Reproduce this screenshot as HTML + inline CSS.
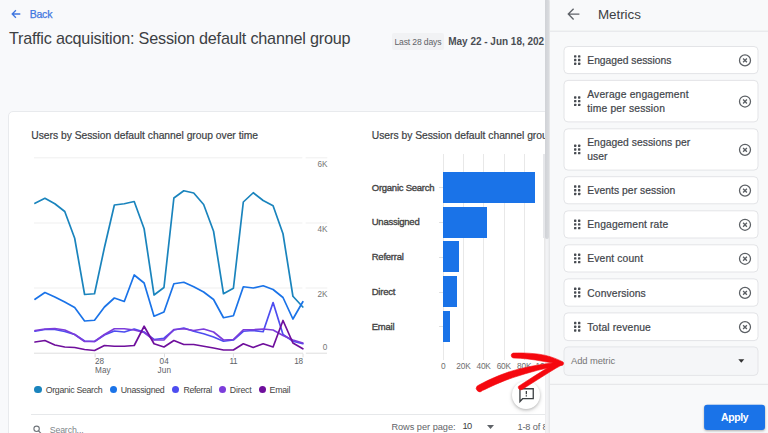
<!DOCTYPE html>
<html><head><meta charset="utf-8"><title>Traffic acquisition</title>
<style>
html,body{margin:0;padding:0}
body{width:768px;height:433px;overflow:hidden;position:relative;background:#f8f9fb;font-family:"Liberation Sans",sans-serif;color:#3c4043}
div,svg{position:absolute}
.t{white-space:nowrap}
.chipbg{left:391.7px;top:33px;width:52.8px;height:16.5px;background:#f1f2f4;border-radius:2px}
.card{left:8px;top:111px;width:560px;height:340px;background:#fff;border:1px solid #e8eaed;border-radius:5px;box-sizing:border-box}
.dot{width:7.2px;height:7.2px;border-radius:50%;top:385.9px}
.bar{left:442.75px;height:31px;background:#1a73e8}
.bt{left:438.5px;width:4px;height:1px;background:#e0e0e0}
.vg{top:153.5px;height:206px;width:1px;background:#e8e8e8}
.sb{left:544.8px;top:0;width:4.8px;height:433px;background:#f2f3f5;box-shadow:inset .6px 0 0 #e9eaec}
.sbt{left:544.9px;top:-4px;width:4.4px;height:242.8px;background:linear-gradient(90deg,#d0d2d6,#d6d8dc 60%,#e2e4e7);border-radius:0 0 2.2px 2.2px}
.sbx{left:543.3px;top:153.5px;width:1.8px;height:84px;background:#e6e7ea}
.panel{left:549.5px;top:0;width:219px;height:433px;background:#f8f9fa;box-shadow:-1px 0 2px rgba(0,0,0,.08)}
.ph{left:0;top:31px;width:219px;height:1px;background:#e3e4e6}
.it{left:14px;width:194.5px;background:#fff;border:1px solid #e2e3e5;border-radius:3px;box-sizing:border-box}
.it .dh{left:8.6px;top:50%;margin-top:-5px;width:8px;height:10px}
.it .cl{left:174px;top:50%;margin-top:-7px;width:14px;height:14px}
.add{left:14px;top:346.6px;width:194.5px;height:28.6px;background:#f1f3f4;border:1px solid #e2e3e5;border-radius:3px;box-sizing:border-box}
.pd{left:0;top:383.5px;width:219px;height:1px;background:#e3e4e6}
.apply{left:154.5px;top:405px;width:61px;height:24.7px;background:#1a73e8;border-radius:3px;box-shadow:0 1px 2px rgba(0,0,0,.3)}
.fab{left:512.1px;top:380.7px;width:28.2px;height:28.2px;border-radius:50%;background:#fff;box-shadow:0 1px 3px rgba(0,0,0,.22),0 2px 5px rgba(0,0,0,.1)}
</style></head><body>
<svg style="left:11px;top:9.1px" width="10" height="10" viewBox="0 0 10 10"><path d="M9.3 5 H1.4 M4.9 1.3 L1.2 5 L4.9 8.7" fill="none" stroke="#3f76e0" stroke-width="1.3"/></svg>
<div class="chipbg"></div>
<div class="card"></div>
<svg style="left:0;top:0" width="545" height="433" viewBox="0 0 545 433">
<g stroke="#efefef" stroke-width="1" fill="none">
<path d="M34 157.8 H302.4 M305.6 157.8 H327.3"/><path d="M34 223 H302.4 M305.6 223 H327.3"/><path d="M34 288 H302.4 M305.6 288 H327.3"/>
</g>
<path d="M34 353.2 H303 M305.8 353.2 H327" stroke="#dedede" stroke-width="1" fill="none"/>
<path d="M95.1 353.5 V357.3 M164.5 353.5 V357.3 M233.4 353.5 V357.3 M303 353.5 V357.3" stroke="#dedede" stroke-width="1" fill="none"/>
<path d="M35.0,203.25 L44.92,198.25 L54.84,203.75 L64.76,211.5 L74.68,238.25 L84.6,294.5 L94.52,293.75 L104.44,247.5 L114.36,205 L124.28,203.75 L134.2,201.5 L144.12,228.75 L154.04,295 L163.96,287.5 L173.88,198 L183.8,190.75 L193.72,193 L203.64,204.5 L213.56,231.25 L223.48,293.75 L233.4,288.25 L243.32,202 L253.24,192.75 L263.16,200.5 L273.08,205.75 L283.0,233.75 L292.92,296.25 L302.84,307" fill="none" stroke="#1a84bd" stroke-width="1.7" stroke-linejoin="round" stroke-linecap="round"/>
<path d="M35.0,299.25 L44.92,292.5 L54.84,297 L64.76,302 L74.68,307.5 L84.6,321 L94.52,320.25 L104.44,307 L114.36,298 L124.28,301.5 L134.2,275 L144.12,283 L154.04,316.25 L163.96,312 L173.88,283.75 L183.8,282.25 L193.72,286.75 L203.64,292 L213.56,299.5 L223.48,317.75 L233.4,315.75 L243.32,286.75 L253.24,288 L263.16,285.75 L273.08,289.5 L283.0,297.5 L292.92,319 L302.84,301.75" fill="none" stroke="#1a73e8" stroke-width="1.7" stroke-linejoin="round" stroke-linecap="round"/>
<path d="M35.0,331.25 L44.92,329.5 L54.84,329.5 L64.76,331.5 L74.68,334.5 L84.6,341 L94.52,341.5 L104.44,335 L114.36,331 L124.28,332 L134.2,329 L144.12,332 L154.04,339.5 L163.96,338.25 L173.88,330 L183.8,328 L193.72,331.25 L203.64,333.75 L213.56,337 L223.48,341.25 L233.4,340 L243.32,331.25 L253.24,330.5 L263.16,331.75 L273.08,302.5 L283.0,334.5 L292.92,341.25 L302.84,343.75" fill="none" stroke="#4d4df0" stroke-width="1.7" stroke-linejoin="round" stroke-linecap="round"/>
<path d="M35.0,330.5 L44.92,329 L54.84,328.5 L64.76,330 L74.68,334.5 L84.6,341.5 L94.52,341.5 L104.44,334.5 L114.36,328.75 L124.28,328.75 L134.2,330 L144.12,332.5 L154.04,340 L163.96,340 L173.88,329.5 L183.8,328.75 L193.72,330.5 L203.64,329 L213.56,332 L223.48,340 L233.4,339.5 L243.32,329.75 L253.24,329.75 L263.16,329 L273.08,330 L283.0,335.5 L292.92,340 L302.84,343" fill="none" stroke="#7c3ddb" stroke-width="1.7" stroke-linejoin="round" stroke-linecap="round"/>
<path d="M35.0,342 L44.92,340.5 L54.84,345 L64.76,347 L74.68,347.5 L84.6,349.5 L94.52,350.5 L104.44,345.5 L114.36,346.25 L124.28,346.25 L134.2,345.5 L144.12,326.25 L154.04,343.75 L163.96,347 L173.88,340.5 L183.8,344.5 L193.72,344.5 L203.64,346.25 L213.56,348 L223.48,350 L233.4,350 L243.32,343.75 L253.24,347.5 L263.16,343.75 L273.08,347 L283.0,320.5 L292.92,343 L302.84,348.75" fill="none" stroke="#6f0f9c" stroke-width="1.7" stroke-linejoin="round" stroke-linecap="round"/>
</svg>
<div class="dot" style="left:34.4px;background:#1a84bd"></div>
<div class="dot" style="left:109.8px;background:#1a73e8"></div>
<div class="dot" style="left:172.3px;background:#4d4df0"></div>
<div class="dot" style="left:219.2px;background:#7c3ddb"></div>
<div class="dot" style="left:258.8px;background:#6f0f9c"></div>
<div class="vg" style="left:442.5px"></div><div class="vg" style="left:463px"></div><div class="vg" style="left:483.2px"></div><div class="vg" style="left:503.5px"></div><div class="vg" style="left:524px"></div><div class="vg" style="left:544.3px"></div>
<div class="bar" style="top:171.75px;width:92.0px"></div><div class="bt" style="top:187.25px"></div>
<div class="bar" style="top:206.5px;width:43.75px"></div><div class="bt" style="top:222.0px"></div>
<div class="bar" style="top:241.25px;width:15.75px"></div><div class="bt" style="top:256.75px"></div>
<div class="bar" style="top:276px;width:14.25px"></div><div class="bt" style="top:291.5px"></div>
<div class="bar" style="top:310.9px;width:6.85px"></div><div class="bt" style="top:326.4px"></div>

<div style="left:31px;top:414px;width:520px;height:1px;background:#e6e8ea"></div>
<svg style="left:32.7px;top:424.6px" width="9" height="10" viewBox="0 0 9 10"><circle cx="3.6" cy="3.8" r="2.7" fill="none" stroke="#70757a" stroke-width="1.1"/><path d="M5.6 5.9 L8.3 8.8" stroke="#70757a" stroke-width="1.2"/></svg>
<svg style="left:487px;top:424.5px" width="7" height="4" viewBox="0 0 7 4"><path d="M0 0 H7 L3.5 4 Z" fill="#5f6368"/></svg>
<div style="left:0;top:0;width:545px;height:433px;overflow:hidden">
<div id="back" class="t" style="left:29.7px;top:8.0px;font-size:10.5px;line-height:12.6px;color:#3f76e0;letter-spacing:-0.211px;-webkit-text-stroke:.25px #3f76e0;">Back</div>
<div id="title" class="t" style="left:9px;top:28.88px;font-size:16.2px;line-height:19.44px;color:#3c4043;letter-spacing:-0.211px;">Traffic acquisition: Session default channel group</div>
<div id="chip" class="t" style="left:394.5px;top:36.74px;font-size:8.6px;line-height:10.32px;color:#5f6368;letter-spacing:-0.161px;">Last 28 days</div>
<div id="date" class="t" style="left:448.2px;top:35.5px;font-size:10.0px;line-height:12.0px;color:#4a4e54;letter-spacing:-0.009px;font-weight:bold;">May 22 - Jun 18, 202</div>
<div id="ct1" class="t" style="left:31.25px;top:130.02px;font-size:10.3px;line-height:12.36px;color:#3c4043;letter-spacing:-0.009px;-webkit-text-stroke:.2px #3c4043;">Users by Session default channel group over time</div>
<div id="ct2" class="t" style="left:371.75px;top:130.02px;font-size:10.3px;line-height:12.36px;color:#3c4043;letter-spacing:-0.009px;-webkit-text-stroke:.2px #3c4043;">Users by Session default channel group</div>
<div id="yl0" class="t" style="left:327.3px;transform:translateX(-100%);top:159.58px;font-size:8.2px;line-height:9.84px;color:#757575;letter-spacing:-0.158px;">6K</div>
<div id="yl1" class="t" style="left:327.3px;transform:translateX(-100%);top:225.08px;font-size:8.2px;line-height:9.84px;color:#757575;letter-spacing:-0.158px;">4K</div>
<div id="yl2" class="t" style="left:327.3px;transform:translateX(-100%);top:290.38px;font-size:8.2px;line-height:9.84px;color:#757575;letter-spacing:-0.158px;">2K</div>
<div id="yl3" class="t" style="left:327.3px;transform:translateX(-100%);top:342.98px;font-size:8.2px;line-height:9.84px;color:#757575;letter-spacing:0.037px;">0</div>
<div id="x28" class="t" style="left:95.1px;top:357.48px;font-size:8.2px;line-height:9.84px;color:#5f6368;letter-spacing:-0.105px;">28</div>
<div id="xmay" class="t" style="left:95.1px;top:366.28px;font-size:8.2px;line-height:9.84px;color:#5f6368;letter-spacing:0.044px;">May</div>
<div id="x04" class="t" style="left:164.2px;transform:translateX(-50%);top:357.48px;font-size:8.2px;line-height:9.84px;color:#5f6368;letter-spacing:0.195px;">04</div>
<div id="xjun" class="t" style="left:164.4px;transform:translateX(-50%);top:366.28px;font-size:8.2px;line-height:9.84px;color:#5f6368;letter-spacing:0.166px;">Jun</div>
<div id="x11" class="t" style="left:233.4px;transform:translateX(-50%);top:357.48px;font-size:8.2px;line-height:9.84px;color:#5f6368;letter-spacing:-0.3px;">11</div>
<div id="x18" class="t" style="left:302.5px;transform:translateX(-100%);top:357.48px;font-size:8.2px;line-height:9.84px;color:#5f6368;letter-spacing:-0.455px;">18</div>
<div id="lg1" class="t" style="left:45.7px;top:385.12px;font-size:8.8px;line-height:10.56px;color:#444;letter-spacing:-0.316px;">Organic Search</div>
<div id="lg2" class="t" style="left:120.8px;top:385.12px;font-size:8.8px;line-height:10.56px;color:#444;letter-spacing:-0.277px;">Unassigned</div>
<div id="lg3" class="t" style="left:183.4px;top:385.12px;font-size:8.8px;line-height:10.56px;color:#444;letter-spacing:-0.337px;">Referral</div>
<div id="lg4" class="t" style="left:229.8px;top:385.12px;font-size:8.8px;line-height:10.56px;color:#444;letter-spacing:-0.214px;">Direct</div>
<div id="lg5" class="t" style="left:269.6px;top:385.12px;font-size:8.8px;line-height:10.56px;color:#444;letter-spacing:-0.28px;">Email</div>
<div id="bl0" class="t" style="left:371.75px;top:181.65px;font-size:9.5px;line-height:11.4px;color:#444;letter-spacing:-0.251px;-webkit-text-stroke:.35px #444;">Organic Search</div>
<div id="bl1" class="t" style="left:371.75px;top:216.4px;font-size:9.5px;line-height:11.4px;color:#444;letter-spacing:-0.251px;-webkit-text-stroke:.35px #444;">Unassigned</div>
<div id="bl2" class="t" style="left:371.75px;top:251.15px;font-size:9.5px;line-height:11.4px;color:#444;letter-spacing:-0.251px;-webkit-text-stroke:.35px #444;">Referral</div>
<div id="bl3" class="t" style="left:371.75px;top:285.9px;font-size:9.5px;line-height:11.4px;color:#444;letter-spacing:-0.251px;-webkit-text-stroke:.35px #444;">Direct</div>
<div id="bl4" class="t" style="left:371.75px;top:320.8px;font-size:9.5px;line-height:11.4px;color:#444;letter-spacing:-0.251px;-webkit-text-stroke:.35px #444;">Email</div>
<div id="bx0" class="t" style="left:443.3px;transform:translateX(-50%);top:361.72px;font-size:8.3px;line-height:9.96px;color:#6e6e6e;letter-spacing:-0.15px;">0</div>
<div id="bx1" class="t" style="left:463.4px;transform:translateX(-50%);top:361.72px;font-size:8.3px;line-height:9.96px;color:#6e6e6e;letter-spacing:-0.15px;">20K</div>
<div id="bx2" class="t" style="left:483.6px;transform:translateX(-50%);top:361.72px;font-size:8.3px;line-height:9.96px;color:#6e6e6e;letter-spacing:-0.15px;">40K</div>
<div id="bx3" class="t" style="left:503.8px;transform:translateX(-50%);top:361.72px;font-size:8.3px;line-height:9.96px;color:#6e6e6e;letter-spacing:-0.15px;">60K</div>
<div id="bx4" class="t" style="left:524.2px;transform:translateX(-50%);top:361.72px;font-size:8.3px;line-height:9.96px;color:#6e6e6e;letter-spacing:-0.15px;">80K</div>
<div id="bx5" class="t" style="left:545px;transform:translateX(-50%);top:361.72px;font-size:8.3px;line-height:9.96px;color:#6e6e6e;letter-spacing:-0.15px;">100K</div>
<div id="search" class="t" style="left:49.7px;top:424.62px;font-size:8.8px;line-height:10.56px;color:#80868b;letter-spacing:-0.158px;">Search...</div>
<div id="rpp" class="t" style="left:391.4px;top:421.68px;font-size:9.2px;line-height:11.04px;color:#5f6368;letter-spacing:-0.011px;">Rows per page:</div>
<div id="ten" class="t" style="left:462.4px;top:420.92px;font-size:9.3px;line-height:11.16px;color:#3c4043;letter-spacing:-0.45px;">10</div>
<div id="of" class="t" style="left:517.5px;top:422.18px;font-size:9.2px;line-height:11.04px;color:#5f6368;letter-spacing:-0.15px;">1-8 of 8</div>
</div>
<div class="fab"></div>
<svg style="left:0;top:0" width="545" height="433" viewBox="0 0 545 433"><path d="M519.95 388.75 H533.25 V398.7 H522.6 L519.95 401.5 Z" fill="none" stroke="#3c4043" stroke-width="1.3" stroke-linejoin="miter"/><path d="M526.35 390.9 V394.3 M526.35 395.2 V396.5" stroke="#3c4043" stroke-width="1.3"/></svg>
<div class="sb"></div><div class="sbx"></div><div class="sbt"></div>
<div class="panel"></div>
<svg style="left:0;top:0" width="768" height="433" viewBox="0 0 768 433">
<path d="M568.4 14.1 H579.4 M573.6 8.8 L568.3 14.1 L573.6 19.4" fill="none" stroke="#5f6368" stroke-width="1.35"/>
<path d="M550 31.2 H768" stroke="#e3e4e6" stroke-width="1"/>
<rect x="564" y="46.5" width="194" height="27.1" rx="4" fill="#fff" stroke="#e3e4e7" stroke-width="1"/><rect x="574.0" y="55.15" width="2.4" height="2.4" rx=".6" fill="#484c52"/><rect x="578.0" y="55.15" width="2.4" height="2.4" rx=".6" fill="#484c52"/><rect x="574.0" y="58.85" width="2.4" height="2.4" rx=".6" fill="#484c52"/><rect x="578.0" y="58.85" width="2.4" height="2.4" rx=".6" fill="#484c52"/><rect x="574.0" y="62.55" width="2.4" height="2.4" rx=".6" fill="#484c52"/><rect x="578.0" y="62.55" width="2.4" height="2.4" rx=".6" fill="#484c52"/><circle cx="745.0" cy="60.4" r="5.5" fill="none" stroke="#5c6065" stroke-width="1.25"/><path d="M743.1 58.5 l3.8 3.8 m0 -3.8 l-3.8 3.8" stroke="#5c6065" stroke-width="1.35" fill="none"/>
<rect x="564" y="80.4" width="194" height="41.5" rx="4" fill="#fff" stroke="#e3e4e7" stroke-width="1"/><rect x="574.0" y="96.25" width="2.4" height="2.4" rx=".6" fill="#484c52"/><rect x="578.0" y="96.25" width="2.4" height="2.4" rx=".6" fill="#484c52"/><rect x="574.0" y="99.95" width="2.4" height="2.4" rx=".6" fill="#484c52"/><rect x="578.0" y="99.95" width="2.4" height="2.4" rx=".6" fill="#484c52"/><rect x="574.0" y="103.65" width="2.4" height="2.4" rx=".6" fill="#484c52"/><rect x="578.0" y="103.65" width="2.4" height="2.4" rx=".6" fill="#484c52"/><circle cx="745.0" cy="101.5" r="5.5" fill="none" stroke="#5c6065" stroke-width="1.25"/><path d="M743.1 99.6 l3.8 3.8 m0 -3.8 l-3.8 3.8" stroke="#5c6065" stroke-width="1.35" fill="none"/>
<rect x="564" y="128.8" width="194" height="41.3" rx="4" fill="#fff" stroke="#e3e4e7" stroke-width="1"/><rect x="574.0" y="144.55" width="2.4" height="2.4" rx=".6" fill="#484c52"/><rect x="578.0" y="144.55" width="2.4" height="2.4" rx=".6" fill="#484c52"/><rect x="574.0" y="148.25" width="2.4" height="2.4" rx=".6" fill="#484c52"/><rect x="578.0" y="148.25" width="2.4" height="2.4" rx=".6" fill="#484c52"/><rect x="574.0" y="151.95" width="2.4" height="2.4" rx=".6" fill="#484c52"/><rect x="578.0" y="151.95" width="2.4" height="2.4" rx=".6" fill="#484c52"/><circle cx="745.0" cy="149.8" r="5.5" fill="none" stroke="#5c6065" stroke-width="1.25"/><path d="M743.1 147.9 l3.8 3.8 m0 -3.8 l-3.8 3.8" stroke="#5c6065" stroke-width="1.35" fill="none"/>
<rect x="564" y="176.7" width="194" height="27.1" rx="4" fill="#fff" stroke="#e3e4e7" stroke-width="1"/><rect x="574.0" y="185.35" width="2.4" height="2.4" rx=".6" fill="#484c52"/><rect x="578.0" y="185.35" width="2.4" height="2.4" rx=".6" fill="#484c52"/><rect x="574.0" y="189.05" width="2.4" height="2.4" rx=".6" fill="#484c52"/><rect x="578.0" y="189.05" width="2.4" height="2.4" rx=".6" fill="#484c52"/><rect x="574.0" y="192.75" width="2.4" height="2.4" rx=".6" fill="#484c52"/><rect x="578.0" y="192.75" width="2.4" height="2.4" rx=".6" fill="#484c52"/><circle cx="745.0" cy="190.6" r="5.5" fill="none" stroke="#5c6065" stroke-width="1.25"/><path d="M743.1 188.7 l3.8 3.8 m0 -3.8 l-3.8 3.8" stroke="#5c6065" stroke-width="1.35" fill="none"/>
<rect x="564" y="210.8" width="194" height="27.2" rx="4" fill="#fff" stroke="#e3e4e7" stroke-width="1"/><rect x="574.0" y="219.5" width="2.4" height="2.4" rx=".6" fill="#484c52"/><rect x="578.0" y="219.5" width="2.4" height="2.4" rx=".6" fill="#484c52"/><rect x="574.0" y="223.2" width="2.4" height="2.4" rx=".6" fill="#484c52"/><rect x="578.0" y="223.2" width="2.4" height="2.4" rx=".6" fill="#484c52"/><rect x="574.0" y="226.9" width="2.4" height="2.4" rx=".6" fill="#484c52"/><rect x="578.0" y="226.9" width="2.4" height="2.4" rx=".6" fill="#484c52"/><circle cx="745.0" cy="224.75" r="5.5" fill="none" stroke="#5c6065" stroke-width="1.25"/><path d="M743.1 222.85 l3.8 3.8 m0 -3.8 l-3.8 3.8" stroke="#5c6065" stroke-width="1.35" fill="none"/>
<rect x="564" y="244.8" width="194" height="27.2" rx="4" fill="#fff" stroke="#e3e4e7" stroke-width="1"/><rect x="574.0" y="253.5" width="2.4" height="2.4" rx=".6" fill="#484c52"/><rect x="578.0" y="253.5" width="2.4" height="2.4" rx=".6" fill="#484c52"/><rect x="574.0" y="257.2" width="2.4" height="2.4" rx=".6" fill="#484c52"/><rect x="578.0" y="257.2" width="2.4" height="2.4" rx=".6" fill="#484c52"/><rect x="574.0" y="260.9" width="2.4" height="2.4" rx=".6" fill="#484c52"/><rect x="578.0" y="260.9" width="2.4" height="2.4" rx=".6" fill="#484c52"/><circle cx="745.0" cy="258.75" r="5.5" fill="none" stroke="#5c6065" stroke-width="1.25"/><path d="M743.1 256.85 l3.8 3.8 m0 -3.8 l-3.8 3.8" stroke="#5c6065" stroke-width="1.35" fill="none"/>
<rect x="564" y="278.85" width="194" height="27.35" rx="4" fill="#fff" stroke="#e3e4e7" stroke-width="1"/><rect x="574.0" y="287.62" width="2.4" height="2.4" rx=".6" fill="#484c52"/><rect x="578.0" y="287.62" width="2.4" height="2.4" rx=".6" fill="#484c52"/><rect x="574.0" y="291.32" width="2.4" height="2.4" rx=".6" fill="#484c52"/><rect x="578.0" y="291.32" width="2.4" height="2.4" rx=".6" fill="#484c52"/><rect x="574.0" y="295.02" width="2.4" height="2.4" rx=".6" fill="#484c52"/><rect x="578.0" y="295.02" width="2.4" height="2.4" rx=".6" fill="#484c52"/><circle cx="745.0" cy="292.88" r="5.5" fill="none" stroke="#5c6065" stroke-width="1.25"/><path d="M743.1 290.98 l3.8 3.8 m0 -3.8 l-3.8 3.8" stroke="#5c6065" stroke-width="1.35" fill="none"/>
<rect x="564" y="312.9" width="194" height="27.7" rx="4" fill="#fff" stroke="#e3e4e7" stroke-width="1"/><rect x="574.0" y="321.85" width="2.4" height="2.4" rx=".6" fill="#484c52"/><rect x="578.0" y="321.85" width="2.4" height="2.4" rx=".6" fill="#484c52"/><rect x="574.0" y="325.55" width="2.4" height="2.4" rx=".6" fill="#484c52"/><rect x="578.0" y="325.55" width="2.4" height="2.4" rx=".6" fill="#484c52"/><rect x="574.0" y="329.25" width="2.4" height="2.4" rx=".6" fill="#484c52"/><rect x="578.0" y="329.25" width="2.4" height="2.4" rx=".6" fill="#484c52"/><circle cx="745.0" cy="327.1" r="5.5" fill="none" stroke="#5c6065" stroke-width="1.25"/><path d="M743.1 325.2 l3.8 3.8 m0 -3.8 l-3.8 3.8" stroke="#5c6065" stroke-width="1.35" fill="none"/>

<rect x="564" y="346.9" width="194" height="28.5" rx="4" fill="#f5f6f8" stroke="#e4e5e8" stroke-width="1"/>
<path d="M738.3 359.3 H744.3 L741.3 362.7 Z" fill="#333"/>
<path d="M550 384.3 H768" stroke="#e3e4e6" stroke-width="1"/>
<rect x="704.1" y="404.7" width="60.9" height="25.2" rx="3" fill="#1a73e8" style="filter:drop-shadow(0 1px 1px rgba(0,0,0,.3))"/>
</svg>
<div id="metrics" class="t" style="left:597.9px;top:6.96px;font-size:13.4px;line-height:16.08px;color:#3c4043;letter-spacing:-0.022px;">Metrics</div>
<div id="it0a" class="t" style="left:587.3px;top:55.17px;font-size:10.3px;line-height:12.36px;color:#41444a;letter-spacing:-0.01px;-webkit-text-stroke:.2px #41444a;">Engaged sessions</div>
<div id="it1a" class="t" style="left:587.2px;top:89.17px;font-size:10.3px;line-height:12.36px;color:#41444a;letter-spacing:0.179px;-webkit-text-stroke:.2px #41444a;">Average engagement</div>
<div id="it1b" class="t" style="left:587.2px;top:103.17px;font-size:10.3px;line-height:12.36px;color:#41444a;letter-spacing:0.188px;-webkit-text-stroke:.2px #41444a;">time per session</div>
<div id="it2a" class="t" style="left:587.2px;top:137.47px;font-size:10.3px;line-height:12.36px;color:#41444a;letter-spacing:0.055px;-webkit-text-stroke:.2px #41444a;">Engaged sessions per</div>
<div id="it2b" class="t" style="left:587.2px;top:151.47px;font-size:10.3px;line-height:12.36px;color:#41444a;letter-spacing:0.067px;-webkit-text-stroke:.2px #41444a;">user</div>
<div id="it3a" class="t" style="left:587.3px;top:185.27px;font-size:10.3px;line-height:12.36px;color:#41444a;letter-spacing:0.061px;-webkit-text-stroke:.2px #41444a;">Events per session</div>
<div id="it4a" class="t" style="left:587.3px;top:219.42px;font-size:10.3px;line-height:12.36px;color:#41444a;letter-spacing:0.133px;-webkit-text-stroke:.2px #41444a;">Engagement rate</div>
<div id="it5a" class="t" style="left:587.3px;top:253.42px;font-size:10.3px;line-height:12.36px;color:#41444a;letter-spacing:0.137px;-webkit-text-stroke:.2px #41444a;">Event count</div>
<div id="it6a" class="t" style="left:587.3px;top:287.54px;font-size:10.3px;line-height:12.36px;color:#41444a;letter-spacing:0.124px;-webkit-text-stroke:.2px #41444a;">Conversions</div>
<div id="it7a" class="t" style="left:587.3px;top:321.57px;font-size:10.3px;line-height:12.36px;color:#41444a;letter-spacing:0.144px;-webkit-text-stroke:.2px #41444a;">Total revenue</div>
<div id="addt" class="t" style="left:571px;top:354.96px;font-size:9.4px;line-height:11.28px;color:#757575;letter-spacing:-0.081px;">Add metric</div>
<div id="applyt" class="t" style="left:721px;top:412.26px;font-size:10.4px;line-height:12.48px;color:#fff;letter-spacing:-0.315px;font-weight:bold;">Apply</div>

<svg style="left:0;top:0" width="768" height="433" viewBox="0 0 768 433">
<g fill="#f5080f" stroke="#f5080f" stroke-width="0.6" stroke-linejoin="round">
<path d="M477.2,386.0 C485,381.5 497,376 507.8,372.3 C520,368.2 540,363.8 562.3,362 L562.3,365 C545,368 530,372 513,377.6 C500,382 490,387 482.4,390.6 A2.9 2.9 0 0 1 477.2,386 Z"/>
<path d="M513.0,353.1 C525,352.6 538,353.6 545.5,355.4 C552,357 558,359.3 563,362 A2 2 0 0 1 562.3,365.3 C555,363 548,362.2 542.9,361.3 C533,359.3 522,358.2 513.6,358.0 A2.5 2.5 0 0 1 513.0,353.1 Z"/>
<path d="M518.4,386.4 C525,382 533,377 540.3,372.3 C546,368.8 553,364.5 560,361.7 L563,364.3 C558,366.8 553,370 548.1,373.0 C540,378 530,384.5 522.1,389.5 A2.6 2.6 0 0 1 518.4,386.4 Z"/>
</g>
</svg>
</body></html>
